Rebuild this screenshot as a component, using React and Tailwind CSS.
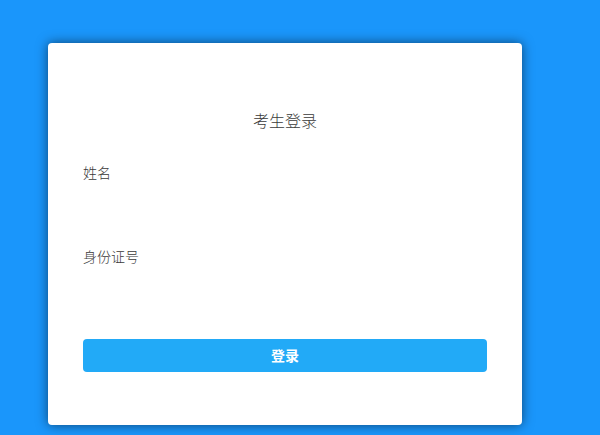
export default function App() {
  return (
    <div
      className="w-[600px] h-[435px] overflow-hidden bg-[#1a96fb] pt-[43px] pl-[48px]"
      style={{ fontFamily: '"Noto Sans CJK SC", "Noto Sans", sans-serif' }}
    >
      <div className="w-[474px] h-[382px] bg-white rounded-[4px] shadow-[0_0_12px_rgba(0,0,0,0.55)] px-[35px] pt-[65px]">
        <h1 className="text-center text-[16px] leading-[24px] font-light text-[#3a3a3a]">考生登录</h1>
        <div className="mt-[30px] text-[14px] leading-[20px] font-light text-[#3a3a3a]">姓名</div>
        <div className="h-[64px]" />
        <div className="text-[14px] leading-[20px] font-light text-[#3a3a3a]">身份证号</div>
        <div className="h-[73px]" />
        <button className="w-full h-[33px] rounded-[4px] bg-[#22aaf7] text-white text-[14px] font-bold">
          登录
        </button>
      </div>
    </div>
  );
}
